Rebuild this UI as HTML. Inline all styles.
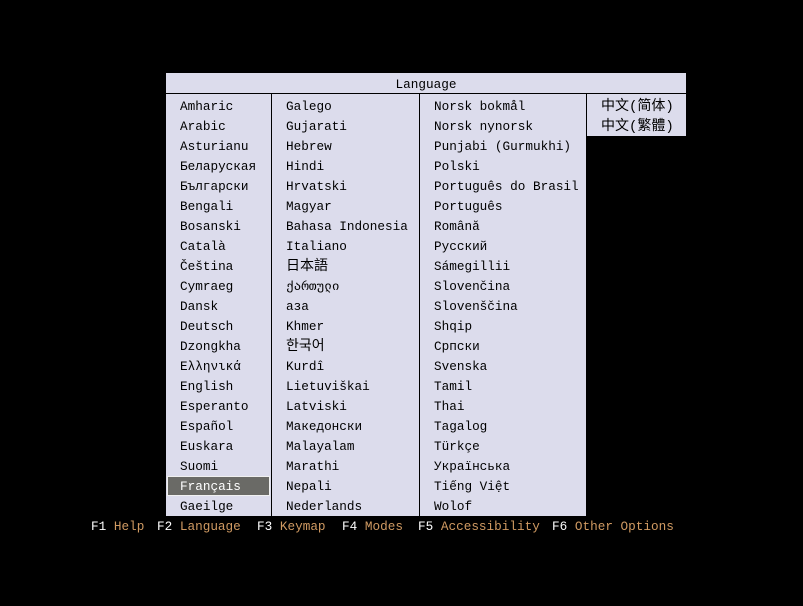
<!DOCTYPE html>
<html><head><meta charset="utf-8"><style>
body{margin:0;width:803px;height:606px;background:#000;overflow:hidden;position:relative;font-family:"Liberation Mono","Noto Sans CJK SC",monospace;font-size:12.7px}
.p{position:absolute;background:#dcdcec}
.c{position:absolute;top:97px;line-height:20px;color:#000;white-space:pre}
.v{position:absolute;top:94px;width:1px;background:#000}
.f{position:absolute;top:517px;line-height:20px;white-space:pre}
.w{color:#fff}.o{color:#d09a62}
</style></head><body>
<div class="p" style="left:166px;top:73px;width:520px;height:443px"></div>
<div class="p" style="left:586px;top:94px;width:100px;height:42px"></div>
<div style="position:absolute;left:586px;top:136px;width:100px;height:380px;background:#000"></div>
<div style="position:absolute;left:166px;top:74px;width:520px;height:20px;line-height:22px;text-align:center;color:#000">Language</div>
<div style="position:absolute;left:166px;top:93px;width:520px;height:1px;background:#000"></div>
<div class="v" style="left:271px;height:422px"></div>
<div class="v" style="left:419px;height:422px"></div>
<div class="v" style="left:586px;height:422px"></div>
<div style="position:absolute;left:167px;top:476px;width:101px;height:18px;background:#6a6a66;border:1px solid #f0f0f0"></div>
<div class="c" style="left:180px">Amharic
Arabic
Asturianu
Беларуская
Български
Bengali
Bosanski
Català
Čeština
Cymraeg
Dansk
Deutsch
Dzongkha
Ελληνικά
English
Esperanto
Español
Euskara
Suomi
<span style="color:#fff">Français</span>
Gaeilge</div>
<div class="c" style="left:286px">Galego
Gujarati
Hebrew
Hindi
Hrvatski
Magyar
Bahasa Indonesia
Italiano
<span style="font-size:14px">日本語</span>
ქართული
аза
Khmer
<span style="font-size:14px">한국어</span>
Kurdî
Lietuviškai
Latviski
Македонски
Malayalam
Marathi
Nepali
Nederlands</div>
<div class="c" style="left:434px">Norsk bokmål
Norsk nynorsk
Punjabi (Gurmukhi)
Polski
Português do Brasil
Português
Română
Русский
Sámegillii
Slovenčina
Slovenščina
Shqip
Српски
Svenska
Tamil
Thai
Tagalog
Türkçe
Українська
Tiếng Việt
Wolof</div>
<div class="c" style="left:601px;font-size:14px">中文(简体)
中文(繁體)</div>
<div class="f" style="left:91px"><span class="w">F1</span> <span class="o">Help</span></div>
<div class="f" style="left:157px"><span class="w">F2</span> <span class="o">Language</span></div>
<div class="f" style="left:257px"><span class="w">F3</span> <span class="o">Keymap</span></div>
<div class="f" style="left:342px"><span class="w">F4</span> <span class="o">Modes</span></div>
<div class="f" style="left:418px"><span class="w">F5</span> <span class="o">Accessibility</span></div>
<div class="f" style="left:552px"><span class="w">F6</span> <span class="o">Other Options</span></div>
</body></html>
